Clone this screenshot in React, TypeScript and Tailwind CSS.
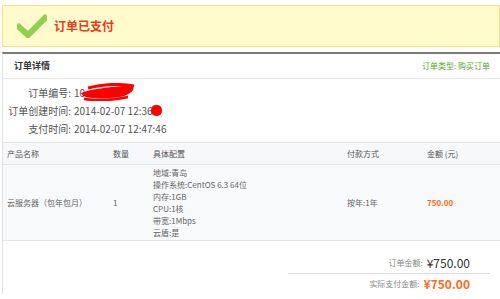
import React from "react";

const font = { fontFamily: '"Noto Sans CJK SC", "Liberation Sans", sans-serif' };

function Scribble() {
  return (
    <svg width="56" height="18" viewBox="0 0 56 18" className="absolute left-[6px] top-[-1px]">
      <path d="M1 10 C 12 6, 28 4, 44 3 C 52 2, 55 4, 53 7 C 50 12, 40 15, 30 15 C 18 16, 8 15, 3 13 Z" fill="#ff0000" />
      <path d="M8 5 Q 30 -1 54 3" stroke="#ff0000" strokeWidth="3" fill="none" />
      <path d="M4 16 Q 26 19 48 14" stroke="#ff0000" strokeWidth="2.5" fill="none" />
    </svg>
  );
}

export default function App() {
  return (
    <div className="w-[500px] h-[299px] bg-white overflow-hidden pt-[5px]" style={font}>
      {/* paid banner */}
      <div className="ml-[2px] h-[42px] bg-[#fffbcc] border border-[#ffe27a] flex items-center">
        <svg width="30" height="24" viewBox="0 0 30 24" className="ml-[14px]">
          <path d="M2 13 L11 21 L28 4" stroke="#8fd14f" strokeWidth="6" fill="none" strokeLinecap="square" />
        </svg>
        <span className="ml-[7px] text-[12px] font-bold text-[#e8401c]">订单已支付</span>
      </div>

      {/* order detail card */}
      <div className="mt-[5px] ml-[2px] border-t-2 border-t-[#7a7a7a] border-l border-l-[#e2e2e2]">
        <div className="h-[25px] flex items-center justify-between pl-[11px] pr-[10px] border-b border-[#e6e6e6]">
          <span className="text-[9px] font-bold text-[#333]">订单详情</span>
          <span className="text-[8px] text-[#5aa829]">订单类型: 购买订单</span>
        </div>

        <div className="pt-[5px] pb-[4px] text-[10px] text-[#555] leading-[18px] whitespace-nowrap">
          <div className="flex">
            <span className="w-[68px] text-right">订单编号:</span>
            <span className="ml-[3px] relative">
              10
              <Scribble />
            </span>
          </div>
          <div className="flex">
            <span className="w-[68px] text-right">订单创建时间:</span>
            <span className="ml-[3px] relative">
              2014-02-07 12:36
              <span className="absolute left-[77px] top-[3px] w-[11px] h-[11px] bg-[#ff0000] rounded-[45%]" />
            </span>
          </div>
          <div className="flex">
            <span className="w-[68px] text-right">支付时间:</span>
            <span className="ml-[3px]">2014-02-07 12:47:46</span>
          </div>
        </div>

        {/* table */}
        <div className="border-t border-[#e6e6e6]">
          <div className="h-[22px] flex items-center bg-[#f7f8fa] border-b border-[#e4e4e4] text-[8px] text-[#555] whitespace-nowrap">
            <span className="w-[107px] pl-[4px]">产品名称</span>
            <span className="w-[42px] pl-[3px]">数量</span>
            <span className="w-[192px] pl-[1px]">具体配置</span>
            <span className="w-[80px] pl-[3px]">付款方式</span>
            <span className="pl-[3px]">金额 (元)</span>
          </div>
          <div className="h-[76px] flex items-center bg-[#f8f9fb] border-b border-[#e4e4e4] text-[8px] text-[#666] whitespace-nowrap">
            <span className="w-[107px] pl-[4px]">云服务器（包年包月）</span>
            <span className="w-[42px] pl-[3px]">1</span>
            <div className="w-[192px] pl-[1px] leading-[12px]">
              <div>地域:青岛</div>
              <div>操作系统:CentOS 6.3 64位</div>
              <div>内存:1GB</div>
              <div>CPU:1核</div>
              <div>带宽:1Mbps</div>
              <div>云盾:是</div>
            </div>
            <span className="w-[80px] pl-[3px]">按年:1年</span>
            <span className="pl-[3px] font-bold text-[#ff6a1a]">750.00</span>
          </div>
        </div>

        {/* totals */}
        <div className="flex justify-end pr-[10px] pt-[11px]">
          <div className="w-[202px] text-right">
            <div className="h-[22px] flex items-center justify-end border-b border-[#dcdcdc] pr-[20px]">
              <span className="text-[8px] text-[#888]">订单金额:</span>
              <span className="ml-[4px] text-[12px] text-[#333]">¥750.00</span>
            </div>
            <div className="h-[20px] flex items-center justify-end pr-[20px]">
              <span className="text-[8px] text-[#888]">实际支付金额:</span>
              <span className="ml-[4px] text-[12px] font-bold text-[#ff6a1a]">¥750.00</span>
            </div>
          </div>
        </div>
      </div>
    </div>
  );
}
